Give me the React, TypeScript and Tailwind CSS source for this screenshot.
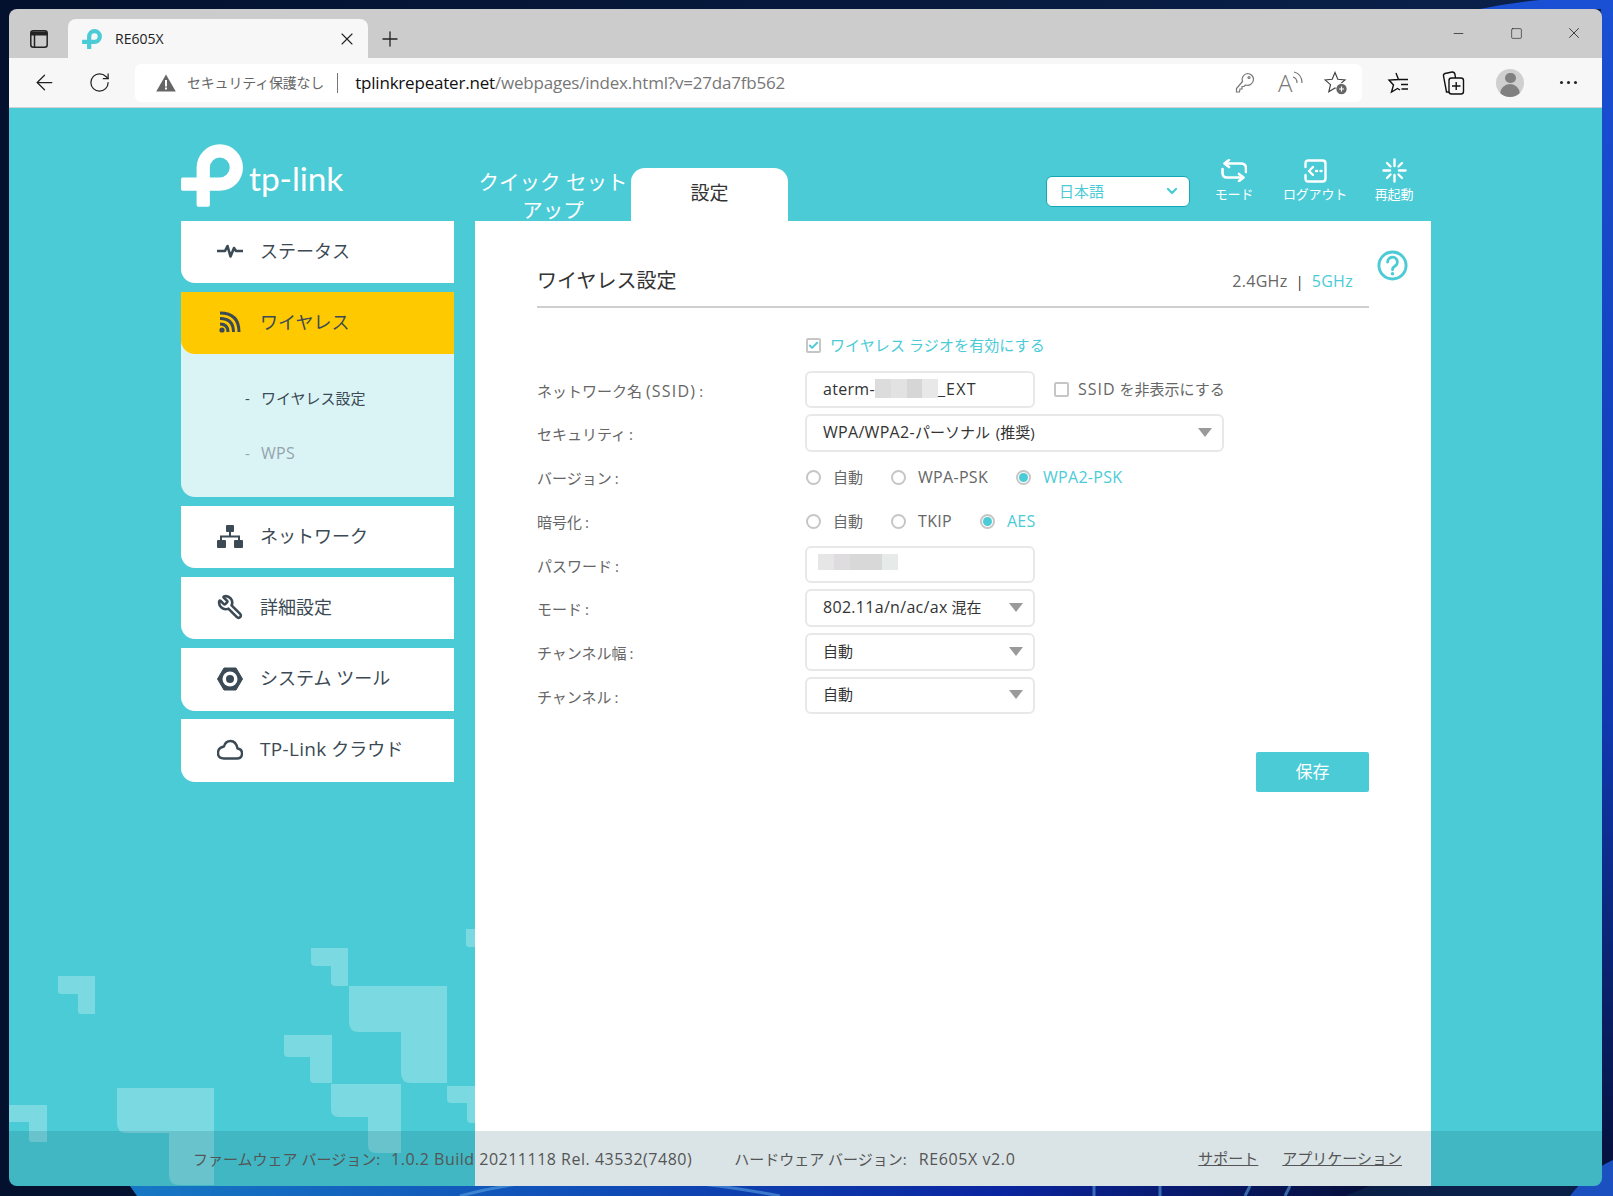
import { ArrowLeft, Check, ChevronDown, Minus, Plus, RotateCw, Square, Wrench, X } from 'lucide-react'
import type { ReactNode } from 'react'

function lShape(x0: number, y0: number, x1: number, y1: number, ix: number, iy: number, r: number) {
  return `M${x0} ${y0}H${x1}V${y1}H${ix + r}Q${ix} ${y1} ${ix} ${y1 - r}V${iy}H${x0 + r}Q${x0} ${iy} ${x0} ${iy - r}Z`
}

// the page's latin runs come out wider than its Japanese
function L({ children }: { children: ReactNode }) {
  return <span className="text-[16px] tracking-[0.3px]">{children}</span>
}

function LogoMark({ className }: { className: string }) {
  return (
    <svg viewBox="18 15 187 188" className={className} fill="currentColor" fillRule="evenodd">
      <path d="M65 115V85A70 70 0 1 1 135 155H105V198Q105 203 100 203H70Q65 203 65 198V155H23Q18 155 18 150V120Q18 115 23 115ZM105 85A30 30 0 1 1 135 115H105Z" />
    </svg>
  )
}

function Wallpaper() {
  return (
    <svg viewBox="0 0 1613 1196" className="absolute inset-0 h-[1196px] w-[1613px]">
      <defs>
        <linearGradient id="top" x1="0" x2="1" y1="0" y2="0">
          <stop offset="0" stopColor="#03112e" />
          <stop offset="0.9" stopColor="#0a2048" />
        </linearGradient>
        <linearGradient id="bottom" x1="0" x2="1" y1="0" y2="0">
          <stop offset="0" stopColor="#1678c4" />
          <stop offset="0.35" stopColor="#1050b8" />
          <stop offset="0.7" stopColor="#0a25a0" />
          <stop offset="1" stopColor="#060f3a" />
        </linearGradient>
        <linearGradient id="side" x1="0" x2="0" y1="0" y2="1">
          <stop offset="0" stopColor="#1a50d4" />
          <stop offset="0.6" stopColor="#1038b0" />
          <stop offset="1" stopColor="#050f35" />
        </linearGradient>
      </defs>
      <rect width="1613" height="1196" fill="url(#top)" />
      <path d="M1480 9Q1510 3 1540 0H1613V1196H1601V9Z" fill="url(#side)" />
      <path d="M130 1186H1370L1345 1196H137Z" fill="url(#bottom)" />
      <path d="M1570 1196Q1590 1170 1613 1160V1196Z" fill="#1a50c0" />
      <path d="M460 1196Q590 1160 780 1196M1094 1186V1196M1160 1186V1196M1250 1186L1245 1196M1290 1186L1285 1196" fill="none" stroke="#5aa0e0" strokeWidth="3" opacity="0.6" />
    </svg>
  )
}

function Decor() {
  const shapes = [
    [58, 976, 95, 1014, 78, 994, 3],
    [311, 948, 348, 986, 331, 966, 4],
    [349, 986, 447, 1083, 401, 1032, 10],
    [284, 1035, 332, 1083, 310, 1057, 4],
    [331, 1084, 401, 1153, 368, 1117, 8],
    [117, 1088, 214, 1185, 169, 1133, 10],
    [4, 1105, 47, 1142, 29, 1122, 3],
    [447, 1086, 490, 1123, 467, 1103, 4],
    [466, 929, 480, 947, 476, 947, 3],
  ]
  return (
    <svg viewBox="9 108 1593 1078" className="absolute inset-0 h-[1078px] w-[1593px]" fill="#ffffff" fillOpacity="0.27">
      {shapes.map((s, i) => (
        <path key={i} d={lShape(s[0], s[1], s[2], s[3], s[4], s[5], s[6])} />
      ))}
    </svg>
  )
}

function TabBar() {
  return (
    <div className="flex h-[49px] shrink-0 bg-[#cccccc]">
      <div className="flex w-[59px] items-center justify-center pt-[10px]">
        <svg viewBox="0 0 18 18" className="h-[18px] w-[18px]" fill="none" stroke="#222222" strokeWidth="1.5">
          <rect x="0.8" y="0.8" width="16.4" height="16.4" rx="2.5" />
          <path d="M0.8 3.5H17.2" strokeWidth="4" />
          <path d="M4.5 5V17" />
        </svg>
      </div>
      <div className="mt-[10px] flex w-[300px] items-center rounded-t-lg bg-[#f7f7f7] pl-[14px] pr-[11px]">
        <LogoMark className="h-[20px] w-[20px] text-[#4bcbd6]" />
        <span className="ml-[13px] text-[14px] text-[#222222]">RE605X</span>
        <X className="ml-auto" size={20} strokeWidth={1.3} color="#222222" />
      </div>
      <div className="flex w-[44px] items-center justify-center pt-[10px]">
        <Plus size={24} strokeWidth={1.3} color="#222222" />
      </div>
      <div className="-mr-px ml-auto flex h-[49px]">
        <div className="flex w-[58px] items-center justify-center pb-[1px]"><Minus size={15} strokeWidth={1.2} color="#222222" /></div>
        <div className="flex w-[58px] items-center justify-center pb-[1px]"><Square size={13} strokeWidth={1.2} color="#222222" /></div>
        <div className="flex w-[58px] items-center justify-center pb-[1px]"><X size={18} strokeWidth={1.1} color="#222222" /></div>
      </div>
    </div>
  )
}

function Toolbar() {
  return (
    <div className="flex h-[50px] shrink-0 items-center border-b border-[#d2d2d2] bg-[#f7f7f7] pl-[8px]">
      <div className="flex w-[55px] justify-center"><ArrowLeft size={25} strokeWidth={1.2} color="#222222" /></div>
      <div className="flex w-[55px] justify-center"><RotateCw size={23} strokeWidth={1.3} color="#222222" /></div>
      <div className="ml-[8px] flex h-[38px] w-[1227px] items-center rounded-md bg-white pl-[21px] pr-[14px]">
        <svg viewBox="0 0 20 18" className="h-[18px] w-[20px]">
          <path d="M10 0.5L19.8 17.5H0.2Z" fill="#666666" />
          <rect x="9" y="6" width="2" height="6.5" fill="#ffffff" />
          <rect x="9" y="13.5" width="2" height="2" fill="#ffffff" />
        </svg>
        <span className="ml-[11px] text-[14px] tracking-[-0.2px] text-[#666666]">セキュリティ保護なし</span>
        <span className="ml-[13px] h-[20px] w-px bg-[#777777]" />
        <span className="ml-[17px] pt-[1px] text-[17px] tracking-[-0.2px] text-[#777777]">
          <span className="text-[#111111]">tplinkrepeater.net</span>/webpages/index.html?v=27da7fb562
        </span>
        <div className="ml-auto flex items-center">
          <svg viewBox="0 0 20 22" className="-ml-px h-[22px] w-[20px]" fill="none" stroke="#777777" strokeWidth="1.2">
            <path d="M12.5 1.5A6 6 0 0 1 18.5 7.5A6 6 0 0 1 10.5 13L9 14.5H7V17H5L4.5 20H1.5V16.5L7.5 9.5A6 6 0 0 1 12.5 1.5Z" />
            <circle cx="14" cy="5.5" r="1" />
          </svg>
          <div className="ml-[23px] flex h-[24px] w-[28px] items-center text-[24px] leading-none text-[#777777]">
            <span className="font-light">A</span>
            <svg viewBox="0 0 12 16" className="mb-[10px] h-[16px] w-[12px]" fill="none" stroke="#777777" strokeWidth="1.2">
              <path d="M1 7Q5 8 5 13M2 2Q10 4 10 13" />
            </svg>
          </div>
          <svg viewBox="0 0 24 24" className="ml-[18px] h-[24px] w-[24px]" fill="none" stroke="#444444" strokeWidth="1.2">
            <path d="M11 1.5L13.8 8.3L21 8.9L15.5 13.6L17.2 20.8L11 17L4.8 20.8L6.5 13.6L1 8.9L8.2 8.3Z" />
            <circle cx="17.5" cy="18" r="6" fill="#ffffff" stroke="none" />
            <circle cx="17.5" cy="18" r="5.2" fill="#666666" stroke="none" />
            <path d="M17.5 15.5V20.5M15 18H20" stroke="#ffffff" strokeWidth="1.2" />
          </svg>
        </div>
      </div>
      <div className="ml-[8px] flex w-[56px] justify-center">
        <svg viewBox="0 0 24 24" className="h-[24px] w-[24px]" fill="none" stroke="#111111" strokeWidth="1.4">
          <path d="M10 2L12.5 8.5L3 9L7.5 14L5.5 21L11.5 17.5L14 19" />
          <path d="M13 8.5H22M15 13.5H22M15.5 18H22" />
        </svg>
      </div>
      <div className="-ml-px flex w-[56px] justify-center">
        <svg viewBox="0 0 24 26" className="h-[26px] w-[24px]" fill="none" stroke="#111111" strokeWidth="1.4">
          <rect x="8" y="8" width="14.5" height="16" rx="2.5" />
          <path d="M15.2 12V20M11 16H19.5" />
          <path d="M8 22H5.5L2.5 6Q2.2 4 4 3.5L11 2Q13.5 1.8 14 4.5L14.5 8" />
        </svg>
      </div>
      <div className="ml-px flex w-[56px] justify-center">
        <div className="relative flex h-[28px] w-[28px] flex-col items-center overflow-hidden rounded-full bg-[#cfcfcf]">
          <span className="mt-[4px] h-[12px] w-[11px] rounded-full bg-[#808080]" />
          <span className="mt-[1px] h-[14px] w-[20px] rounded-t-full bg-[#808080]" />
        </div>
      </div>
      <div className="ml-[2px] flex w-[56px] justify-center gap-[4px]">
        <span className="h-[3px] w-[3px] rounded-full bg-[#222222]" />
        <span className="h-[3px] w-[3px] rounded-full bg-[#222222]" />
        <span className="h-[3px] w-[3px] rounded-full bg-[#222222]" />
      </div>
    </div>
  )
}

function HeaderAction({ icon, label, offset }: { icon: ReactNode; label: string; offset: string }) {
  return (
    <div className={`flex w-[78px] flex-col items-center pt-[49px] ${offset}`}>
      <div className="flex h-[27px] items-center">{icon}</div>
      <span className="mt-[1px] text-[13px] leading-[18px] tracking-[-0.2px] text-white">{label}</span>
    </div>
  )
}

function Header() {
  return (
    <div className="relative flex h-[113px] shrink-0 pl-[172px]">
      <div className="flex w-[294px] items-start pt-[36px]">
        <LogoMark className="h-[63px] w-[62px] text-white" />
        <span className="ml-[6px] mt-[14px] font-['Lato',sans-serif] text-[33.5px] leading-[40px] tracking-[-0.1px] text-white">tp-link</span>
      </div>
      <div className="w-[156px] pt-[60px] text-center text-[20.5px] leading-[28px] text-white">クイック セット アップ</div>
      <div className="mt-[60px] flex h-[53px] w-[157px] items-center justify-center rounded-t-[14px] bg-white pb-[3px] text-[19px] text-[#333333]">設定</div>
      <div className="ml-[258px] mt-[68px] flex h-[31px] w-[144px] items-center justify-between rounded-md border border-[#15a6b5] bg-white pb-[1px] pl-[12px] pr-[9px] text-[15px] text-[#4bcbd6]">
        日本語
        <ChevronDown size={16} strokeWidth={3.5} color="#4bcbd6" />
      </div>
      <HeaderAction
        offset="ml-[5px]"
        label="モード"
        icon={
          <svg viewBox="0 0 26 23" className="h-[23px] w-[26px]" fill="none" stroke="#ffffff" strokeWidth="2.6" strokeLinecap="round" strokeLinejoin="round">
            <path d="M5 4.5H20Q25 4.5 25 9.5V13" />
            <path d="M8 1L3.5 4.5L8 8" />
            <path d="M21 18.5H6Q1.5 18.5 1.5 14V10" />
            <path d="M18 15L22.5 18.5L18 22" />
          </svg>
        }
      />
      <HeaderAction
        offset="ml-[3px]"
        label="ログアウト"
        icon={
          <svg viewBox="0 0 23 24" className="h-[24px] w-[23px]" fill="none" stroke="#ffffff" strokeWidth="2.4" strokeLinecap="round" strokeLinejoin="round">
            <path d="M1.5 8V4.5Q1.5 1.5 4.5 1.5H18.5Q21.5 1.5 21.5 4.5V19.5Q21.5 22.5 18.5 22.5H4.5Q1.5 22.5 1.5 19.5V16" />
            <path d="M9 8L5 12L9 16M12 12H13M16.5 12H17.5" />
          </svg>
        }
      />
      <HeaderAction
        offset="ml-[1px]"
        label="再起動"
        icon={
          <svg viewBox="0 0 25 25" className="h-[25px] w-[25px]" fill="none" stroke="#ffffff" strokeWidth="2.4" strokeLinecap="round">
            <path d="M12.5 1.5V8M12.5 17V23.5M1.5 12.5H8M17 12.5H23.5M5 5L8.5 8.5M20 5L16.5 8.5M5 20L8.5 16.5M20 20L16.5 16.5" />
          </svg>
        }
      />
    </div>
  )
}

function MenuItem({ icon, label, active, tall }: { icon: ReactNode; label: ReactNode; active?: boolean; tall?: boolean }) {
  return (
    <div className={`flex items-center rounded-bl-[14px] pb-[2px] text-[18px] text-[#3b4a54] ${tall ? 'h-[63px]' : 'h-[62px]'} ${active ? 'bg-[#ffc900]' : 'bg-white'}`}>
      <div className="flex w-[79px] justify-end pr-[17px]">{icon}</div>
      <span>{label}</span>
    </div>
  )
}

function Sidebar() {
  const dark = '#3b4a54'
  return (
    <div className="flex w-[273px] shrink-0 flex-col gap-[9px]">
      <MenuItem
        label="ステータス"
        icon={
          <svg viewBox="0 0 26 16" className="h-[16px] w-[26px]" fill="none" stroke={dark} strokeWidth="2.6" strokeLinejoin="round">
            <path d="M0 8H8L10.5 3L13.5 13.5L17 5L19 8H26" />
          </svg>
        }
      />
      <div className="rounded-bl-[14px] bg-[#daf4f6]">
        <MenuItem
          active
          label="ワイヤレス"
          icon={
            <svg viewBox="0 0 22 22" className="mr-[2px] h-[22px] w-[22px]" fill="none" stroke={dark} strokeWidth="3">
              <path d="M1 2Q20 2 20 21M1 7.5Q14.5 7.5 14.5 21M1 13Q9 13 9 21" />
              <circle cx="3" cy="19" r="2.6" fill={dark} stroke="none" />
            </svg>
          }
        />
        <div className="flex h-[143px] flex-col pl-[64px] text-[15px]">
          <div className="mt-[33px] flex h-[22px] items-center text-[#3b4a54]">
            <span className="w-[16px]">-</span>ワイヤレス設定
          </div>
          <div className="mt-[33px] flex h-[22px] items-center text-[#96a3ac]">
            <span className="w-[16px]">-</span><L>WPS</L>
          </div>
        </div>
      </div>
      <MenuItem
        label="ネットワーク"
        icon={
          <svg viewBox="0 0 26 23" className="h-[23px] w-[26px]" fill={dark}>
            <rect x="9" y="0" width="8" height="7" rx="1" />
            <rect x="0" y="15" width="9" height="8" rx="1" />
            <rect x="17" y="15" width="9" height="8" rx="1" />
            <path d="M12 7H14V10.5H23V15H21V12.5H5V15H3V10.5H12Z" />
          </svg>
        }
      />
      <MenuItem label="詳細設定" icon={<Wrench className="-scale-x-100" size={26} strokeWidth={2.4} color={dark} />} />
      <div className="-mb-px">
        <MenuItem
          tall
          label="システム ツール"
          icon={
            <svg viewBox="0 0 26 24" className="h-[24px] w-[26px]" fill={dark}>
              <path d="M7 1H19L25.5 12L19 23H7L0.5 12Z" stroke={dark} strokeWidth="1" strokeLinejoin="round" />
              <circle cx="13" cy="12" r="7.5" fill="#ffffff" />
              <circle cx="13" cy="12" r="4" />
            </svg>
          }
        />
      </div>
      <MenuItem
        tall
        label={<><span className="text-[19px] tracking-[0.3px]">TP-Link</span> クラウド</>}
        icon={
          <svg viewBox="0 0 26 21" className="h-[21px] w-[26px]" fill="none" stroke={dark} strokeWidth="2.4" strokeLinejoin="round">
            <path d="M7 19.5H20Q25 19.5 25 14.5Q25 10 20.5 9.5Q19 2 13.5 2Q8.5 2 7 7.5Q1 8.5 1 14Q1 19.5 7 19.5Z" />
          </svg>
        }
      />
    </div>
  )
}

function Radio({ label, on }: { label: ReactNode; on?: boolean }) {
  return (
    <div className={`flex items-center gap-[12px] ${on ? 'text-[#4bcbd6]' : 'text-[#666666]'}`}>
      <span className="flex h-[15px] w-[15px] items-center justify-center rounded-full border-2 border-[#c6c6c6] bg-white">
        {on && <span className="h-[9px] w-[9px] rounded-full bg-[#4bcbd6]" />}
      </span>
      <span>{label}</span>
    </div>
  )
}

function Field({ label, children, short }: { label: ReactNode; children: ReactNode; short?: boolean }) {
  return (
    <div className={`flex items-center ${short ? 'h-[37px]' : 'h-[38px]'}`}>
      <div className="w-[268px] pt-[3px] text-[#666666]">
        {label}
        <span className="ml-[3px]">:</span>
      </div>
      {children}
    </div>
  )
}

function SelectBox({ value, wide, short }: { value: ReactNode; wide?: boolean; short?: boolean }) {
  return (
    <div className={`flex items-center justify-between rounded-md border-2 border-[#e8e8e8] bg-white pb-[2px] pl-[16px] pr-[10px] text-[#333333] ${short ? 'h-[37px]' : 'h-[38px]'} ${wide ? 'w-[419px]' : 'w-[230px]'}`}>
      <span>{value}</span>
      <svg viewBox="0 0 14 9" className="h-[9px] w-[14px]">
        <path d="M0 0H14L7 9Z" fill="#9a9a9a" />
      </svg>
    </div>
  )
}

function Censor({ blocks }: { blocks: string[] }) {
  return (
    <span className="flex">
      {blocks.map((c, i) => (
        <span key={i} className={c} />
      ))}
    </span>
  )
}

function WirelessForm() {
  return (
    <div className="relative flex flex-1 bg-white pl-[62px]">
      <div className="w-[832px] text-[15px]">
        <div className="flex h-[87px] items-center justify-between border-b-2 border-[#cfcfcf] pr-[16px] pt-[34px]">
          <span className="text-[20px] text-[#333333]">ワイヤレス設定</span>
          <span className="text-[#666666]">
            <L>2.4GHz</L><span className="mx-[8px] text-[#333333]">|</span><span className="text-[#4bcbd6]"><L>5GHz</L></span>
          </span>
        </div>
        <div className="ml-[269px] mt-[30px] flex h-[15px] items-center gap-[9px] text-[#4bcbd6]">
          <span className="flex h-[15px] w-[15px] items-center justify-center rounded-[2px] border-2 border-[#c6c6c6] bg-white">
            <Check size={11} strokeWidth={4} color="#4bcbd6" />
          </span>
          <span className="tracking-[0.1px]">ワイヤレス ラジオを有効にする</span>
        </div>
        <div className="mt-[18px] flex flex-col gap-[6px]">
          <Field short label={<>ネットワーク名 <span className="text-[16px] tracking-[1.2px]">(SSID)</span></>}>
            <div className="flex h-[37px] w-[230px] items-center rounded-md border-2 border-[#e8e8e8] pb-[2px] pl-[16px] text-[#333333]">
              <L>aterm-</L>
              <Censor blocks={['h-[19px] w-[16px] bg-[#dcdcdc]', 'h-[19px] w-[16px] bg-[#e2e2e2]', 'h-[19px] w-[15px] bg-[#d6d6d6]', 'h-[19px] w-[16px] bg-[#e8e8e8]']} />
              <span className="text-[16px] tracking-[1.2px]">_EXT</span>
            </div>
            <span className="ml-[19px] h-[15px] w-[15px] rounded-[2px] border-2 border-[#c6c6c6]" />
            <span className="ml-[9px] pb-[2px] text-[#666666]"><span className="text-[16px] tracking-[1px]">SSID</span> を非表示にする</span>
          </Field>
          <Field label="セキュリティ">
            <SelectBox wide value={<><L>WPA/WPA2-</L>パーソナル <span className="ml-[2px]">(推奨)</span></>} />
          </Field>
          <Field label="バージョン">
            <div className="flex gap-[28px] pl-[1px]">
              <Radio label="自動" />
              <Radio label={<L>WPA-PSK</L>} />
              <Radio on label={<L>WPA2-PSK</L>} />
            </div>
          </Field>
          <Field label="暗号化">
            <div className="flex gap-[28px] pl-[1px]">
              <Radio label="自動" />
              <Radio label={<L>TKIP</L>} />
              <Radio on label={<L>AES</L>} />
            </div>
          </Field>
          <Field short label="パスワード">
            <div className="flex h-[37px] w-[230px] items-start rounded-md border-2 border-[#e8e8e8] pl-[11px] pt-[6px]">
              <Censor blocks={['h-[16px] w-[16px] bg-[#e6e6e6]', 'h-[16px] w-[16px] bg-[#dedcde]', 'h-[16px] w-[32px] bg-[#d8d8d8]', 'h-[16px] w-[16px] bg-[#e6eae8]']} />
            </div>
          </Field>
          <Field label="モード">
            <SelectBox value={<><L>802.11a/n/ac/ax</L> 混在</>} />
          </Field>
          <Field label="チャンネル幅">
            <SelectBox value="自動" />
          </Field>
          <Field short label="チャンネル">
            <SelectBox short value="自動" />
          </Field>
        </div>
        <div className="mt-[38px] flex justify-end">
          <div className="flex h-[40px] w-[113px] items-center justify-center rounded-[2px] bg-[#4bcbd6] text-[17px] text-white">保存</div>
        </div>
      </div>
      <svg viewBox="0 0 32 32" className="ml-[8px] mt-[29px] h-[31px] w-[31px]" fill="none" stroke="#4bcbd6" strokeWidth="3">
        <circle cx="16" cy="16" r="14" />
        <path d="M11 12.5A5 5 0 1 1 18 17Q16 18 16 20.5" strokeLinecap="round" />
        <circle cx="16" cy="24.5" r="1.8" fill="#4bcbd6" stroke="none" />
      </svg>
    </div>
  )
}

function Footer() {
  return (
    <div className="absolute inset-x-0 bottom-0 flex h-[55px] items-center bg-[rgba(0,69,83,0.145)] pl-[184px] pr-[200px] text-[15px] text-[#555555]">
      <span>ファームウェア バージョン:<span className="ml-[11px] text-[16px] tracking-[0.5px]">1.0.2 Build 20211118 Rel. 43532(7480)</span></span>
      <span className="ml-[42px]">ハードウェア バージョン:<span className="ml-[12px] text-[16px] tracking-[0.6px]">RE605X v2.0</span></span>
      <span className="ml-auto underline">サポート</span>
      <span className="ml-[24px] underline">アプリケーション</span>
    </div>
  )
}

export default function App() {
  return (
    <div className="relative h-[1196px] w-[1613px] overflow-hidden pl-[9px] pt-[9px] font-['Open_Sans','Noto_Sans_CJK_JP',sans-serif]">
      <Wallpaper />
      <div className="relative flex h-[1177px] w-[1593px] flex-col overflow-hidden rounded-lg">
        <TabBar />
        <Toolbar />
        <div className="relative flex flex-1 flex-col bg-[#4bcbd6]">
          <Decor />
          <Header />
          <div className="relative flex flex-1 gap-[21px] pl-[172px]">
            <Sidebar />
            <div className="flex w-[956px]">
              <WirelessForm />
            </div>
          </div>
          <Footer />
        </div>
      </div>
    </div>
  )
}
